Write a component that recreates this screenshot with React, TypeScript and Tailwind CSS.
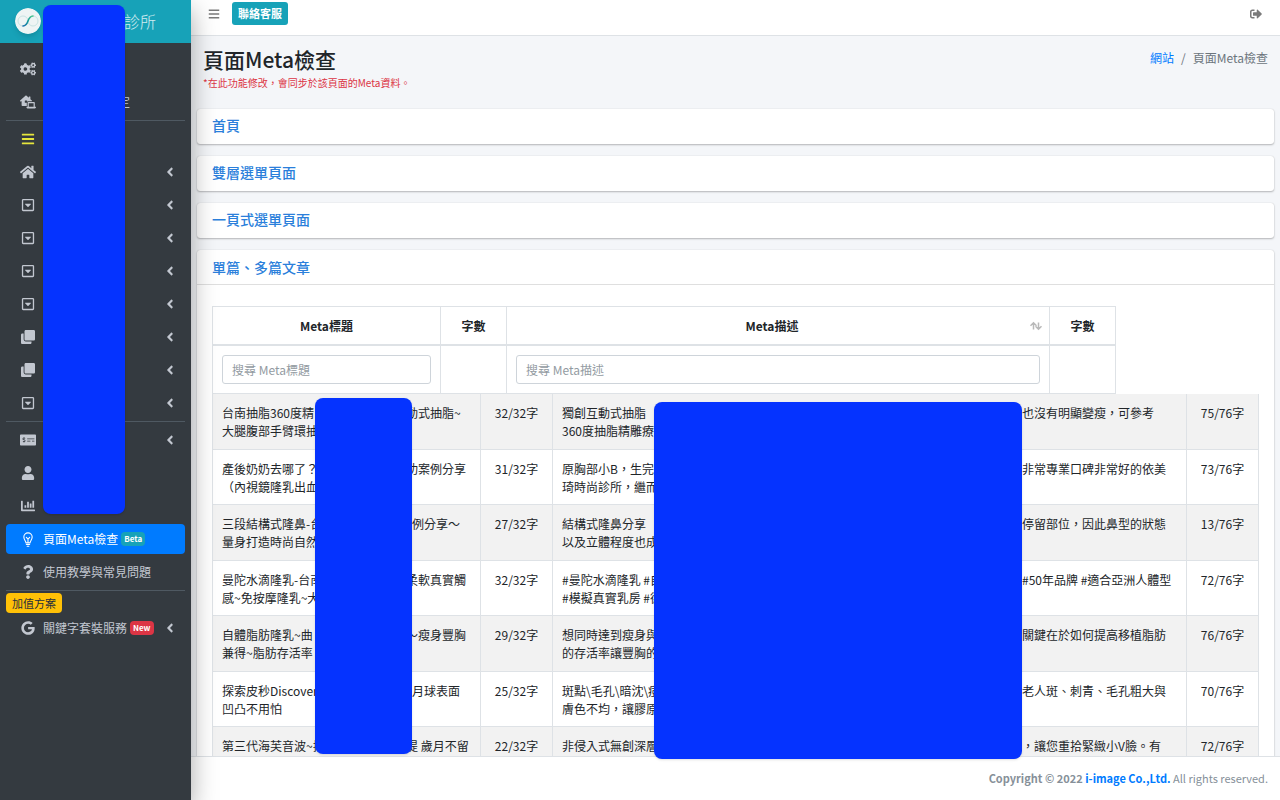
import { useState } from 'react';
import type { ReactNode } from 'react';
import {
    FaAngleLeft,
    FaBars,
    FaChartBar,
    FaClone,
    FaCogs,
    FaGoogle,
    FaHome,
    FaLaptopHouse,
    FaMoneyCheckAlt,
    FaQuestion,
    FaRegCaretSquareDown,
    FaSignOutAlt,
    FaUser,
} from 'react-icons/fa';

type Line = { left: string; right?: string; cut?: boolean };
type Row = { title: Line[]; titleCount: string; desc: Line[]; descCount: string };

const rows: Row[] = [
    {
        title: [{ left: '台南抽脂360度精', right: '動式抽脂~', cut: true }, { left: '大腿腹部手臂環抽' }],
        titleCount: '32/32字',
        desc: [{ left: '獨創互動式抽脂', right: '也沒有明顯變瘦，可參考' }, { left: '360度抽脂精雕療' }],
        descCount: '75/76字',
    },
    {
        title: [{ left: '產後奶奶去哪了？', right: '功案例分享', cut: true }, { left: '（內視鏡隆乳出血' }],
        titleCount: '31/32字',
        desc: [{ left: '原胸部小B，生完', right: '非常專業口碑非常好的依美' }, { left: '琦時尚診所，繼而' }],
        descCount: '73/76字',
    },
    {
        title: [{ left: '三段結構式隆鼻-台', right: '例分享～' }, { left: '量身打造時尚自然' }],
        titleCount: '27/32字',
        desc: [{ left: '結構式隆鼻分享', right: '停留部位，因此鼻型的狀態' }, { left: '以及立體程度也成' }],
        descCount: '13/76字',
    },
    {
        title: [{ left: '曼陀水滴隆乳-台南', right: '柔軟真實觸', cut: true }, { left: '感~免按摩隆乳~大' }],
        titleCount: '32/32字',
        desc: [{ left: '#曼陀水滴隆乳 #自', right: '#50年品牌 #適合亞洲人體型' }, { left: '#模擬真實乳房 #德' }],
        descCount: '72/76字',
    },
    {
        title: [{ left: '自體脂肪隆乳~曲', right: '～瘦身豐胸', cut: true }, { left: '兼得~脂肪存活率' }],
        titleCount: '29/32字',
        desc: [{ left: '想同時達到瘦身與', right: '關鍵在於如何提高移植脂肪' }, { left: '的存活率讓豐胸的' }],
        descCount: '76/76字',
    },
    {
        title: [{ left: '探索皮秒Discovery', right: '月球表面' }, { left: '凹凸不用怕' }],
        titleCount: '25/32字',
        desc: [{ left: '斑點\\毛孔\\暗沈\\痘', right: '老人斑、刺青、毛孔粗大與' }, { left: '膚色不均，讓膠原' }],
        descCount: '70/76字',
    },
    {
        title: [{ left: '第三代海芙音波~拉', right: '提 歲月不留', cut: true }],
        titleCount: '22/32字',
        desc: [{ left: '非侵入式無創深層', right: '，讓您重拾緊緻小V臉。有' }],
        descCount: '72/76字',
    },
];

function Logo() {
    return (
        <svg viewBox="0 0 26 26" className="h-[26px] w-[26px] rounded-full shadow-md" aria-hidden="true">
            <defs>
                <linearGradient id="swoosh" x1="0" y1="1" x2="1" y2="0">
                    <stop offset="0" stopColor="#1b6fae" />
                    <stop offset=".5" stopColor="#159b9c" />
                    <stop offset="1" stopColor="#52c98f" />
                </linearGradient>
            </defs>
            <circle cx="13" cy="13" r="13" fill="#eef4f4" />
            <circle cx="8" cy="13" r="5" fill="none" stroke="#bfdedd" strokeWidth=".8" />
            <circle cx="18" cy="13" r="5" fill="none" stroke="#bfdedd" strokeWidth=".8" />
            <path d="M8 18c6.500-.3 3.500-9.700 10-10" fill="none" stroke="url(#swoosh)" strokeWidth="1.600" strokeLinecap="round" />
        </svg>
    );
}

function BulbIcon() {
    return (
        <svg viewBox="0 0 14 18" className="h-[15px] w-3" fill="none" stroke="currentColor" strokeWidth="1.300" strokeLinecap="round" strokeLinejoin="round" aria-hidden="true">
            <path d="M4.500 13C4.500 10.500 2 9.500 2 6a5 5 0 0 1 10 0c0 3.500-2.500 4.500-2.500 7z" />
            <path d="M5 15h4M6 17h2M7 12.500V8.500M5 6.500l2 2 2-2" />
        </svg>
    );
}

function SortIcon() {
    return (
        <svg viewBox="0 0 14 10" className="h-[10px] w-[14px]" fill="none" stroke="#b9b9b9" strokeWidth="1.500" aria-hidden="true">
            <path d="M4.500 8.500V2M1.500 4.800l3-3 3 3M9.500 1.500V8M6.500 5.200l3 3 3-3" />
        </svg>
    );
}

function NavItem({ icon, label, children, arrow, active }: {
    icon: ReactNode;
    label?: string;
    children?: ReactNode;
    arrow?: boolean;
    active?: boolean;
}) {
    return (
        <li className="mb-[3px]">
            <a
                href="#"
                aria-label={label}
                className={`flex h-[30px] items-center rounded pr-2 pl-3 text-xs ${active ? 'bg-[#007bff] text-white' : 'text-[#c2c7d0]'}`}
            >
                <span className="flex w-5 shrink-0 justify-center text-sm">{icon}</span>
                <span className="ml-[5px] flex items-center gap-[3px] whitespace-nowrap">{children}</span>
                {arrow && <FaAngleLeft className="ml-auto shrink-0 text-sm" />}
            </a>
        </li>
    );
}

function Divider() {
    return <li className="mb-[3px] border-t border-[#4f5962]" />;
}

function Sidebar() {
    return (
        <aside className="z-10 flex w-[191px] shrink-0 flex-col bg-[#343a40] shadow-[0_10px_24px_rgba(0,0,0,0.35)]">
            <a href="#" className="flex h-[43px] shrink-0 items-center bg-[#17a2b8] pb-[2px] pl-[15px] text-base font-light text-white/80">
                <Logo />
                <span className="ml-[83px]">診所</span>
            </a>
            <nav className="px-[6px] pt-[11px]">
                <ul>
                    <NavItem icon={<FaCogs className="text-base" />} label="系統" />
                    <NavItem icon={<FaLaptopHouse className="text-base" />}>
                        <span className="ml-[75px]">定</span>
                    </NavItem>
                    <Divider />
                    <NavItem icon={<FaBars className="text-[#e6e63c]" />} label="選單" />
                    <NavItem icon={<FaHome className="text-base" />} label="首頁" arrow />
                    <NavItem icon={<FaRegCaretSquareDown />} label="選單一" arrow />
                    <NavItem icon={<FaRegCaretSquareDown />} label="選單二" arrow />
                    <NavItem icon={<FaRegCaretSquareDown />} label="選單三" arrow />
                    <NavItem icon={<FaRegCaretSquareDown />} label="選單四" arrow />
                    <NavItem icon={<FaClone />} label="頁面一" arrow />
                    <NavItem icon={<FaClone />} label="頁面二" arrow />
                    <NavItem icon={<FaRegCaretSquareDown />} label="選單五" arrow />
                    <Divider />
                    <NavItem icon={<FaMoneyCheckAlt className="text-base" />} label="付款" arrow />
                    <NavItem icon={<FaUser />} label="會員" />
                    <NavItem icon={<FaChartBar />} label="統計" />
                    <NavItem icon={<BulbIcon />} active>
                        頁面Meta檢查
                        <span className="rounded-sm bg-[#17a2b8] px-[3px] text-[8px] leading-[14px] font-bold">Beta</span>
                    </NavItem>
                    <NavItem icon={<FaQuestion />}>使用教學與常見問題</NavItem>
                    <li className="flex border-t border-[#4f5962] pt-[2px]">
                        <span className="rounded-sm bg-[#ffc107] px-[6px] text-[11px] leading-5 text-[#1f2d3d]">加值方案</span>
                    </li>
                    <NavItem icon={<FaGoogle />} arrow>
                        關鍵字套裝服務
                        <span className="rounded-sm bg-[#dc3545] px-[3px] text-[8px] leading-[14px] font-bold text-white">New</span>
                    </NavItem>
                </ul>
            </nav>
        </aside>
    );
}

function Lines({ lines, wide }: { lines: Line[]; wide?: boolean }) {
    return (
        <>
            {lines.map((line) => (
                <div key={line.left} className="flex whitespace-nowrap">
                    <span className={`shrink-0 ${wide ? 'w-[460px]' : line.cut ? 'w-[184px]' : 'w-[190px]'}`}>{line.left}</span>
                    {line.right && <span>{line.right}</span>}
                </div>
            ))}
        </>
    );
}

function MetaTable() {
    const [title, setTitle] = useState('');
    const [desc, setDesc] = useState('');

    const input = 'block h-[29px] w-full rounded-[3px] border border-[#ced4da] bg-white px-[9px] text-xs font-normal placeholder-[#939ba2] outline-none';
    const cell = 'border-l border-[#dee2e6] last:border-r';

    return (
        <div className="px-[15px] pt-[21px] text-xs leading-[18px] text-[#212529]">
            <table className="w-[904px] table-fixed border-separate border-spacing-0">
                <colgroup>
                    <col className="w-[228px]" />
                    <col className="w-[66px]" />
                    <col />
                    <col className="w-[67px]" />
                </colgroup>
                <thead>
                    <tr className="h-10">
                        <th className={`${cell} border-t border-b-2`}>Meta標題</th>
                        <th className={`${cell} border-t border-b-2`}>字數</th>
                        <th className={`${cell} border-t border-b-2`}>
                            <div className="flex items-center pr-[6px] pl-2">
                                <span className="flex-1">Meta描述</span>
                                <SortIcon />
                            </div>
                        </th>
                        <th className={`${cell} border-t border-b-2`}>字數</th>
                    </tr>
                    <tr className="h-12">
                        <td className={`${cell} border-b px-[9px]`}>
                            <input className={input} aria-label="搜尋 Meta標題" placeholder="搜尋 Meta標題" value={title} onChange={(e) => setTitle(e.target.value)} />
                        </td>
                        <td className={`${cell} border-b`} />
                        <td className={`${cell} border-b px-[9px]`}>
                            <input className={input} aria-label="搜尋 Meta描述" placeholder="搜尋 Meta描述" value={desc} onChange={(e) => setDesc(e.target.value)} />
                        </td>
                        <td className={`${cell} border-b`} />
                    </tr>
                </thead>
            </table>
            <table className="w-full table-fixed border-separate border-spacing-0">
                <colgroup>
                    <col className="w-[268px]" />
                    <col className="w-[72px]" />
                    <col />
                    <col className="w-[73px]" />
                </colgroup>
                <tbody>
                    {rows.map((row) => (
                        <tr key={row.title[0].left} className="align-top odd:h-14 odd:bg-[#f2f2f2] even:h-[55px]">
                            <td className={`${cell} border-b pt-[10px] pb-2 pl-[9px]`}><Lines lines={row.title} /></td>
                            <td className={`${cell} border-b pt-[10px] pb-2 text-center`}>{row.titleCount}</td>
                            <td className={`${cell} border-b pt-[10px] pb-2 pl-[9px]`}><Lines lines={row.desc} wide /></td>
                            <td className={`${cell} border-b pt-[10px] pb-2 text-center`}>{row.descCount}</td>
                        </tr>
                    ))}
                </tbody>
            </table>
        </div>
    );
}

function Card({ title, children }: { title: string; children?: ReactNode }) {
    return (
        <section className="mb-3 rounded-[3px] bg-white shadow-[0_0_1px_rgba(0,0,0,0.2),0_1px_2px_rgba(0,0,0,0.25)]">
            <h2 className={`flex h-[35px] items-center px-[15px] text-[14px] font-medium ${children ? 'border-b border-[#dfdfdf]' : 'pb-[2px]'}`}>
                <a href="#" className="text-[#2b7fdb]">{title}</a>
            </h2>
            {children}
        </section>
    );
}

export default function App() {
    return (
        <div className="relative flex h-screen overflow-hidden bg-[#f4f6f9] font-['Noto_Sans_CJK_TC',sans-serif]">
            <Sidebar />
            <div className="flex min-w-0 flex-1 flex-col">
                <header className="flex h-9 shrink-0 items-start border-b border-[#dee2e6] bg-white pr-[18px] pl-[17px]">
                    <button aria-label="選單" className="flex h-7 items-center text-xs text-[#7b7b7b]"><FaBars /></button>
                    <button className="mt-[2px] ml-3 h-[23px] rounded-[3px] bg-[#17a2b8] px-[6px] text-[11px] font-bold text-white">聯絡客服</button>
                    <button aria-label="登出" className="ml-auto flex h-7 items-center text-xs text-[#7b7b7b]"><FaSignOutAlt /></button>
                </header>
                <main className="min-h-0 flex-1 overflow-hidden px-[6px] pt-[9px]">
                    <div className="flex h-16 justify-between px-[6px]">
                        <div>
                            <h1 className="text-[21px] leading-7 font-medium text-[#212529]">頁面Meta檢查</h1>
                            <p className="text-[10px] leading-5 text-[#dc3545]">*在此功能修改，會同步於該頁面的Meta資料。</p>
                        </div>
                        <nav className="flex gap-[7px] pt-1 text-xs leading-[18px] text-[#6c757d]">
                            <a href="#" className="text-[#007bff]">網站</a>
                            <span>/</span>
                            <span>頁面Meta檢查</span>
                        </nav>
                    </div>
                    <Card title="首頁" />
                    <Card title="雙層選單頁面" />
                    <Card title="一頁式選單頁面" />
                    <Card title="單篇、多篇文章">
                        <MetaTable />
                    </Card>
                </main>
                <footer className="flex h-11 shrink-0 items-center justify-end border-t border-[#dee2e6] bg-white px-3 text-[11px] text-[#869099]">
                    <p>
                        <strong>Copyright © 2022 <a href="#" className="text-[#007bff]">i-image Co.,Ltd.</a></strong> All rights reserved.
                    </p>
                </footer>
            </div>

            {/* privacy masks over the page */}
            <div className="absolute top-[5px] left-[43px] z-20 h-[509px] w-[82px] rounded-lg bg-[#0533ff] shadow" />
            <div className="absolute top-[398px] left-[315px] z-20 h-[356px] w-[97px] rounded-lg bg-[#0533ff] shadow" />
            <div className="absolute top-[402px] left-[654px] z-20 h-[357px] w-[368px] rounded-lg bg-[#0533ff] shadow" />
        </div>
    );
}
